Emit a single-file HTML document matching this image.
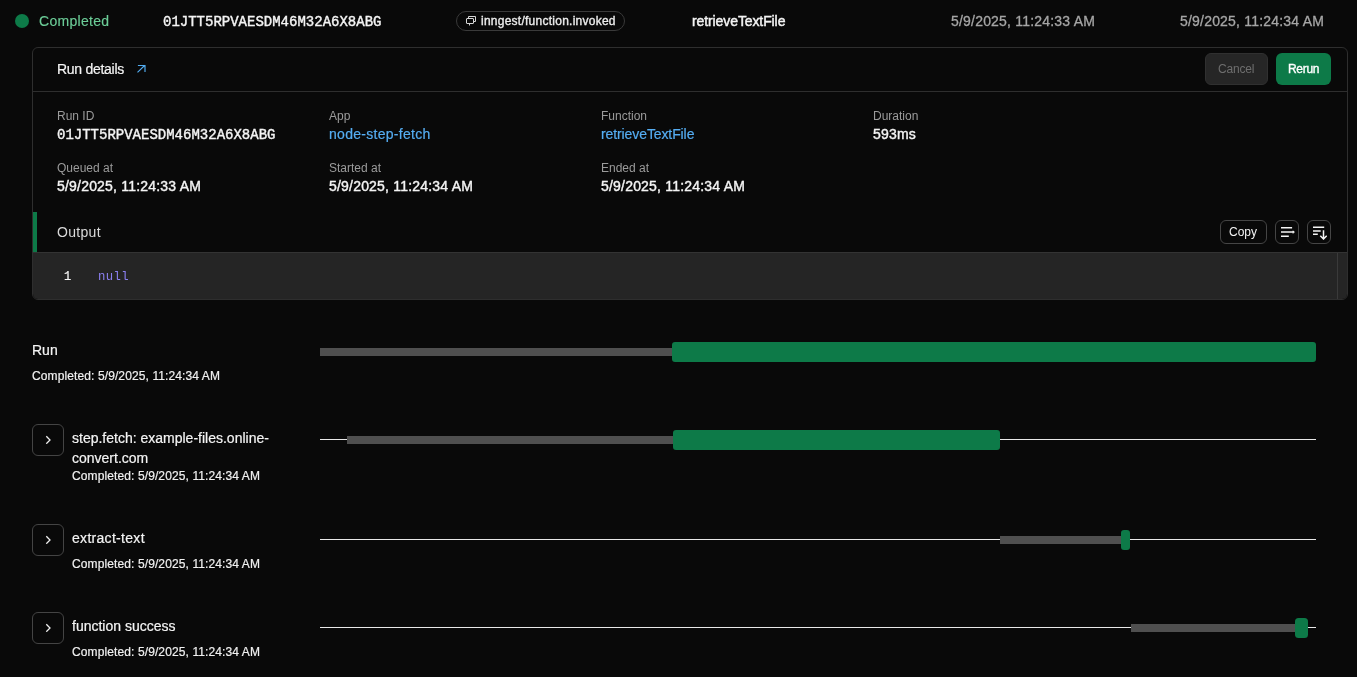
<!DOCTYPE html>
<html><head><meta charset="utf-8">
<style>
*{margin:0;padding:0;box-sizing:border-box}
html,body{width:1357px;height:677px;overflow:hidden;background:#090909;font-family:"Liberation Sans",sans-serif;color:#f2f2f2}
.a{position:absolute;white-space:nowrap;line-height:1}
.mono{font-family:"Liberation Mono",monospace}
.b{font-weight:bold}
.lbl{font-size:12px;color:#9b9b9b}
.val{font-size:14px;color:#f4f4f4;-webkit-text-stroke:0.4px #f4f4f4;letter-spacing:0.2px}
.btn{position:absolute;border-radius:6px}
.ib{position:absolute;border:1px solid #454545;border-radius:6px}
.exp{position:absolute;left:32px;width:32px;height:32px;border:1px solid #444;border-radius:6px}
.track{position:absolute;left:320px;width:996px;height:1px;background:#e8e8e8}
.gray{position:absolute;height:8px;background:#4f4f4f}
.grn{position:absolute;height:20px;background:#0d7a48;border-radius:3px}
.ttl{font-size:14px;color:#f4f4f4;-webkit-text-stroke:0.2px #f4f4f4}
.cmp{font-size:12px;color:#f0f0f0;-webkit-text-stroke:0.2px #f0f0f0;letter-spacing:0.11px}
.med{-webkit-text-stroke:0.2px currentColor}
.semi{-webkit-text-stroke:0.35px currentColor}
</style></head><body><div id="w" style="position:absolute;left:0;top:0;width:1357px;height:677px;will-change:transform">

<!-- header row -->
<div class="a" style="left:15px;top:14px;width:14px;height:14px;border-radius:50%;background:#0d7a48"></div>
<div class="a" style="left:39px;top:14px;font-size:14px;color:#6ccd98;-webkit-text-stroke:0.15px #6ccd98;letter-spacing:0.3px">Completed</div>
<div class="a mono" style="left:163px;top:15px;font-size:14px;color:#f4f4f4;-webkit-text-stroke:0.4px #f4f4f4">01JTT5RPVAESDM46M32A6X8ABG</div>
<div class="a" style="left:456px;top:11px;width:169px;height:20px;border:1px solid #3a3a3a;border-radius:10px"></div>
<svg class="a" style="left:464px;top:14px" width="13" height="13" viewBox="0 0 13 13" fill="none" stroke="#d8d8d8" stroke-width="1"><rect x="2.5" y="4.5" width="7" height="5" rx="0.5"/><path d="M4.5 4.5V2.5h7v5h-2"/><path d="M5.5 9.5v2"/></svg>
<div class="a semi" style="left:481px;top:15px;font-size:12px;color:#ececec;letter-spacing:0.25px">inngest/function.invoked</div>
<div class="a" style="left:692px;top:14px;font-size:14px;color:#f4f4f4;-webkit-text-stroke:0.45px #f4f4f4;letter-spacing:-0.1px">retrieveTextFile</div>
<div class="a" style="left:951px;top:14px;font-size:14px;color:#a6a6a6;-webkit-text-stroke:0.3px #a6a6a6;letter-spacing:0.2px">5/9/2025, 11:24:33 AM</div>
<div class="a" style="left:1180px;top:14px;font-size:14px;color:#a6a6a6;-webkit-text-stroke:0.3px #a6a6a6;letter-spacing:0.2px">5/9/2025, 11:24:34 AM</div>

<!-- panel -->
<div class="a" style="left:32px;top:47px;width:1316px;height:253px;border:1px solid #2e2e2e;border-radius:6px"></div>
<div class="a" style="left:33px;top:91px;width:1314px;height:1px;background:#2e2e2e"></div>
<div class="a med" style="left:57px;top:62px;font-size:14px;color:#f4f4f4;letter-spacing:-0.28px">Run details</div>
<svg class="a" style="left:136px;top:64px" width="10" height="10" viewBox="0 0 10 10" fill="none" stroke="#52acf0" stroke-width="1.15"><path d="M1.5 8.3L8.6 1.5M1.9 1.5H9V8.1"/></svg>
<div class="btn" style="left:1205px;top:53px;width:63px;height:32px;background:#262626;border:1px solid #303030"></div>
<div class="a" style="left:1218px;top:63px;font-size:12px;color:#6e6e6e;letter-spacing:-0.2px">Cancel</div>
<div class="btn" style="left:1276px;top:53px;width:55px;height:32px;background:#0d7a48"></div>
<div class="a semi" style="left:1288px;top:63px;font-size:12px;color:#ffffff;letter-spacing:-0.3px">Rerun</div>

<div class="a lbl" style="left:57px;top:110px">Run ID</div>
<div class="a mono" style="left:57px;top:128px;font-size:14px;color:#f4f4f4;-webkit-text-stroke:0.4px #f4f4f4">01JTT5RPVAESDM46M32A6X8ABG</div>
<div class="a lbl" style="left:329px;top:110px">App</div>
<div class="a med" style="left:329px;top:127px;font-size:14px;color:#55adf2;letter-spacing:0.28px">node-step-fetch</div>
<div class="a lbl" style="left:601px;top:110px">Function</div>
<div class="a med" style="left:601px;top:127px;font-size:14px;color:#55adf2;letter-spacing:-0.1px">retrieveTextFile</div>
<div class="a lbl" style="left:873px;top:110px">Duration</div>
<div class="a val" style="left:873px;top:127px">593ms</div>

<div class="a lbl" style="left:57px;top:162px">Queued at</div>
<div class="a val" style="left:57px;top:179px">5/9/2025, 11:24:33 AM</div>
<div class="a lbl" style="left:329px;top:162px">Started at</div>
<div class="a val" style="left:329px;top:179px">5/9/2025, 11:24:34 AM</div>
<div class="a lbl" style="left:601px;top:162px">Ended at</div>
<div class="a val" style="left:601px;top:179px">5/9/2025, 11:24:34 AM</div>

<!-- output -->
<div class="a" style="left:33px;top:212px;width:4px;height:40px;background:#0d7a48"></div>
<div class="a" style="left:57px;top:225px;font-size:14px;color:#d9d9d9;letter-spacing:0.3px">Output</div>
<div class="ib" style="left:1220px;top:220px;width:47px;height:24px"></div>
<div class="a" style="left:1229px;top:226px;font-size:12px;color:#f4f4f4">Copy</div>
<div class="ib" style="left:1275px;top:220px;width:24px;height:24px"></div>
<svg class="a" style="left:1279px;top:224px" width="16" height="16" viewBox="0 0 16 16" fill="none" stroke="#f5f5f5" stroke-width="1.5"><path d="M2 3.8h11.1M2 8.1h12.6M2 12.3h7.8"/><path d="M13.6 6.9L15 8.1l-1.4 1.2" stroke-width="1.2"/></svg>
<div class="ib" style="left:1307px;top:220px;width:24px;height:24px"></div>
<svg class="a" style="left:1311px;top:224px" width="16" height="16" viewBox="0 0 16 16" fill="none" stroke="#f5f5f5" stroke-width="1.5"><path d="M2 3.3h11.2M2 6.9h7.7M2 10.2h4.8"/><path d="M12.5 6.2v8.6M9.3 11.8L12.5 15l3.2-3.2"/></svg>

<div class="a" style="left:33px;top:252px;width:1314px;height:47px;background:#252525;border-top:1px solid #333;border-radius:0 0 5px 5px"></div>
<div class="a" style="left:1337px;top:253px;width:1px;height:46px;background:#3a3a3a"></div>
<div class="a mono med" style="left:64px;top:271px;font-size:12px;color:#f6f6f6">1</div>
<div class="a mono" style="left:98px;top:271px;font-size:12.3px;color:#8c80f2;letter-spacing:0.4px">null</div>

<!-- timeline -->
<div class="a ttl" style="left:32px;top:343px">Run</div>
<div class="a cmp" style="left:32px;top:370px">Completed: 5/9/2025, 11:24:34 AM</div>
<div class="gray" style="left:320px;top:348px;width:354px"></div>
<div class="grn" style="left:672px;top:342px;width:644px"></div>

<div class="exp" style="top:424px"></div>
<svg class="a" style="left:44px;top:434px" width="10" height="10" viewBox="0 0 10 10" fill="none" stroke="#f0f0f0" stroke-width="1.3"><path d="M2.3 2.2L6 6L2.3 9.7"/></svg>
<div class="a ttl" style="left:72px;top:431px">step.fetch: example-files.online-</div>
<div class="a ttl" style="left:72px;top:451px">convert.com</div>
<div class="a cmp" style="left:72px;top:470px">Completed: 5/9/2025, 11:24:34 AM</div>
<div class="track" style="top:439px"></div>
<div class="gray" style="left:347px;top:436px;width:328px"></div>
<div class="grn" style="left:673px;top:430px;width:327px"></div>

<div class="exp" style="top:524px"></div>
<svg class="a" style="left:44px;top:534px" width="10" height="10" viewBox="0 0 10 10" fill="none" stroke="#f0f0f0" stroke-width="1.3"><path d="M2.3 2.2L6 6L2.3 9.7"/></svg>
<div class="a ttl" style="left:72px;top:531px;letter-spacing:0.3px">extract-text</div>
<div class="a cmp" style="left:72px;top:558px">Completed: 5/9/2025, 11:24:34 AM</div>
<div class="track" style="top:539px"></div>
<div class="gray" style="left:1000px;top:536px;width:123px"></div>
<div class="grn" style="left:1121px;top:530px;width:9px;border-radius:3px"></div>

<div class="exp" style="top:612px"></div>
<svg class="a" style="left:44px;top:622px" width="10" height="10" viewBox="0 0 10 10" fill="none" stroke="#f0f0f0" stroke-width="1.3"><path d="M2.3 2.2L6 6L2.3 9.7"/></svg>
<div class="a ttl" style="left:72px;top:619px">function success</div>
<div class="a cmp" style="left:72px;top:646px">Completed: 5/9/2025, 11:24:34 AM</div>
<div class="track" style="top:627px"></div>
<div class="gray" style="left:1131px;top:624px;width:166px"></div>
<div class="grn" style="left:1295px;top:618px;width:13px;border-radius:3.5px"></div>

</div></body></html>
